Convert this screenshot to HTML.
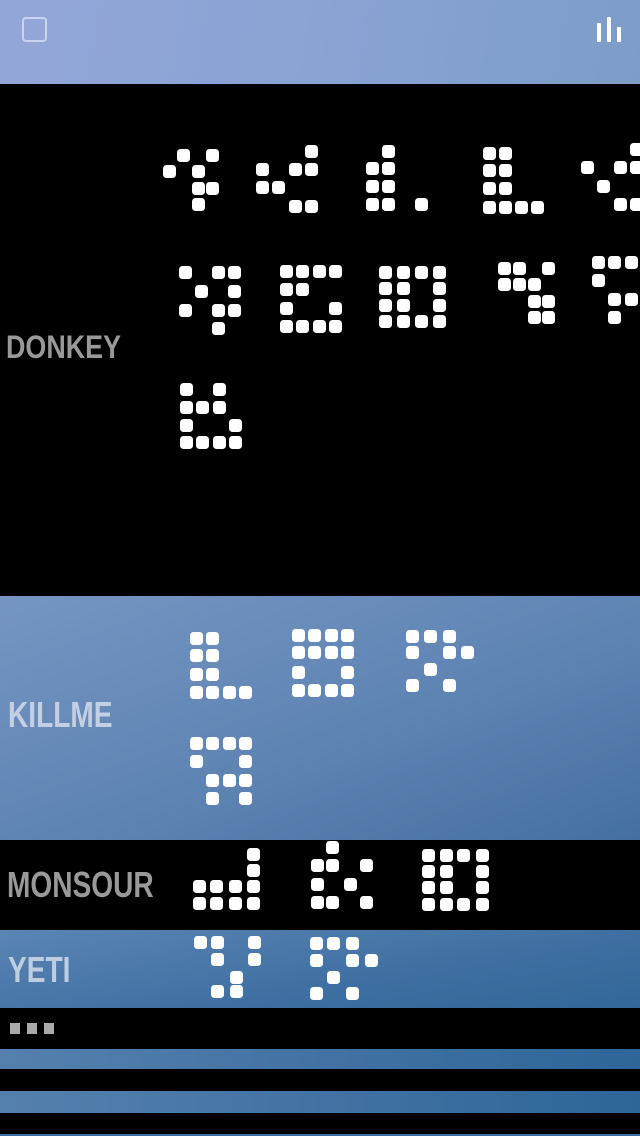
<!DOCTYPE html>
<html><head><meta charset="utf-8"><style>
*{margin:0;padding:0}
body{width:640px;height:1136px;position:relative;overflow:hidden;background:#000;font-family:"Liberation Sans",sans-serif}
.b{position:absolute;left:0;width:640px}
.d{position:absolute;width:13px;height:13px;border-radius:3.5px;background:#fff}
.l{position:absolute;font-weight:bold;transform:scaleX(.78);transform-origin:0 0;white-space:nowrap}
</style></head><body>
<div class="b" style="top:0;height:84px;background:linear-gradient(100deg,#93a6d8,#8aa4d4 45%,#7d9dc8)"></div>
<div class="b" style="top:596px;height:244px;background:linear-gradient(160deg,#7695c2,#5e84b3 55%,#44709f)"></div>
<div class="b" style="top:930px;height:78px;background:linear-gradient(170deg,#5a85b4,#3f6fa2 60%,#336799)"></div>
<div class="b" style="top:1049px;height:20px;background:linear-gradient(90deg,#5580ad,#2f6599)"></div>
<div class="b" style="top:1091px;height:22px;background:linear-gradient(90deg,#5580ad,#2f6599)"></div>
<div class="b" style="top:1134px;height:2px;background:#3f6fa2"></div>

<div style="position:absolute;left:22px;top:17px;width:21px;height:21px;border:2px solid #c9d5ef;border-radius:4px"></div>
<div style="position:absolute;left:597px;top:23px;width:3.5px;height:19px;background:#fff;border-radius:1px"></div>
<div style="position:absolute;left:607px;top:17px;width:3.5px;height:25px;background:#fff;border-radius:1px"></div>
<div style="position:absolute;left:617px;top:27px;width:3.5px;height:15px;background:#fff;border-radius:1px"></div>

<div class="l" style="left:6px;top:331px;font-size:32px;line-height:32px;color:#999;transform:scaleX(.84)">DONKEY</div>
<div class="l" style="left:8px;top:697px;font-size:36px;line-height:36px;color:#c3cfe2">KILLME</div>
<div class="l" style="left:7px;top:867px;font-size:36px;line-height:36px;color:#999">MONSOUR</div>
<div class="l" style="left:8px;top:952px;font-size:36px;line-height:36px;color:#bfcde1">YETI</div>

<div style="position:absolute;left:10px;top:1023px;width:10px;height:11px;background:#aaa"></div>
<div style="position:absolute;left:27px;top:1023px;width:10px;height:11px;background:#aaa"></div>
<div style="position:absolute;left:44px;top:1023px;width:10px;height:11px;background:#aaa"></div>

<!-- DONKEY -->
<div class="d" style="left:177px;top:149px"></div><div class="d" style="left:206px;top:149px"></div><div class="d" style="left:163px;top:165px"></div><div class="d" style="left:192px;top:165px"></div><div class="d" style="left:192px;top:182px"></div><div class="d" style="left:206px;top:182px"></div><div class="d" style="left:192px;top:198px"></div>
<div class="d" style="left:305px;top:145px"></div><div class="d" style="left:256px;top:163px"></div><div class="d" style="left:289px;top:163px"></div><div class="d" style="left:305px;top:163px"></div><div class="d" style="left:256px;top:181px"></div><div class="d" style="left:272px;top:181px"></div><div class="d" style="left:289px;top:200px"></div><div class="d" style="left:305px;top:200px"></div>
<div class="d" style="left:382px;top:145px"></div><div class="d" style="left:366px;top:162px"></div><div class="d" style="left:382px;top:162px"></div><div class="d" style="left:366px;top:180px"></div><div class="d" style="left:382px;top:180px"></div><div class="d" style="left:366px;top:198px"></div><div class="d" style="left:382px;top:198px"></div><div class="d" style="left:415px;top:198px"></div>
<div class="d" style="left:483px;top:147px"></div><div class="d" style="left:499px;top:147px"></div><div class="d" style="left:483px;top:164px"></div><div class="d" style="left:499px;top:164px"></div><div class="d" style="left:483px;top:182px"></div><div class="d" style="left:499px;top:182px"></div><div class="d" style="left:483px;top:201px"></div><div class="d" style="left:499px;top:201px"></div><div class="d" style="left:515px;top:201px"></div><div class="d" style="left:531px;top:201px"></div>
<div class="d" style="left:581px;top:161px"></div><div class="d" style="left:597px;top:180px"></div><div class="d" style="left:614px;top:161px"></div><div class="d" style="left:630px;top:161px"></div><div class="d" style="left:630px;top:143px"></div><div class="d" style="left:614px;top:198px"></div><div class="d" style="left:630px;top:198px"></div>
<div class="d" style="left:179px;top:266px"></div><div class="d" style="left:212px;top:266px"></div><div class="d" style="left:228px;top:266px"></div><div class="d" style="left:195px;top:285px"></div><div class="d" style="left:228px;top:285px"></div><div class="d" style="left:179px;top:304px"></div><div class="d" style="left:212px;top:304px"></div><div class="d" style="left:228px;top:304px"></div><div class="d" style="left:212px;top:322px"></div>
<div class="d" style="left:280px;top:265px"></div><div class="d" style="left:296px;top:265px"></div><div class="d" style="left:313px;top:265px"></div><div class="d" style="left:329px;top:265px"></div><div class="d" style="left:280px;top:283px"></div><div class="d" style="left:296px;top:283px"></div><div class="d" style="left:280px;top:302px"></div><div class="d" style="left:329px;top:302px"></div><div class="d" style="left:280px;top:320px"></div><div class="d" style="left:296px;top:320px"></div><div class="d" style="left:313px;top:320px"></div><div class="d" style="left:329px;top:320px"></div>
<div class="d" style="left:379px;top:266px"></div><div class="d" style="left:397px;top:266px"></div><div class="d" style="left:415px;top:266px"></div><div class="d" style="left:433px;top:266px"></div><div class="d" style="left:379px;top:282px"></div><div class="d" style="left:397px;top:282px"></div><div class="d" style="left:433px;top:282px"></div><div class="d" style="left:379px;top:299px"></div><div class="d" style="left:397px;top:299px"></div><div class="d" style="left:433px;top:299px"></div><div class="d" style="left:379px;top:315px"></div><div class="d" style="left:397px;top:315px"></div><div class="d" style="left:415px;top:315px"></div><div class="d" style="left:433px;top:315px"></div>
<div class="d" style="left:498px;top:262px"></div><div class="d" style="left:513px;top:262px"></div><div class="d" style="left:542px;top:262px"></div><div class="d" style="left:498px;top:278px"></div><div class="d" style="left:513px;top:278px"></div><div class="d" style="left:528px;top:278px"></div><div class="d" style="left:528px;top:295px"></div><div class="d" style="left:542px;top:295px"></div><div class="d" style="left:528px;top:311px"></div><div class="d" style="left:542px;top:311px"></div>
<div class="d" style="left:592px;top:256px"></div><div class="d" style="left:608px;top:256px"></div><div class="d" style="left:625px;top:256px"></div><div class="d" style="left:592px;top:274px"></div><div class="d" style="left:608px;top:293px"></div><div class="d" style="left:625px;top:293px"></div><div class="d" style="left:608px;top:311px"></div>
<div class="d" style="left:180px;top:383px"></div><div class="d" style="left:213px;top:383px"></div><div class="d" style="left:180px;top:401px"></div><div class="d" style="left:196px;top:401px"></div><div class="d" style="left:213px;top:401px"></div><div class="d" style="left:180px;top:419px"></div><div class="d" style="left:229px;top:419px"></div><div class="d" style="left:180px;top:436px"></div><div class="d" style="left:196px;top:436px"></div><div class="d" style="left:213px;top:436px"></div><div class="d" style="left:229px;top:436px"></div>

<!-- KILLME -->
<div class="d" style="left:190px;top:632px"></div><div class="d" style="left:206px;top:632px"></div><div class="d" style="left:190px;top:649px"></div><div class="d" style="left:206px;top:649px"></div><div class="d" style="left:190px;top:668px"></div><div class="d" style="left:206px;top:668px"></div><div class="d" style="left:190px;top:686px"></div><div class="d" style="left:206px;top:686px"></div><div class="d" style="left:223px;top:686px"></div><div class="d" style="left:239px;top:686px"></div>
<div class="d" style="left:292px;top:629px"></div><div class="d" style="left:308px;top:629px"></div><div class="d" style="left:325px;top:629px"></div><div class="d" style="left:341px;top:629px"></div><div class="d" style="left:292px;top:646px"></div><div class="d" style="left:308px;top:646px"></div><div class="d" style="left:325px;top:646px"></div><div class="d" style="left:341px;top:646px"></div><div class="d" style="left:292px;top:666px"></div><div class="d" style="left:341px;top:666px"></div><div class="d" style="left:292px;top:684px"></div><div class="d" style="left:308px;top:684px"></div><div class="d" style="left:325px;top:684px"></div><div class="d" style="left:341px;top:684px"></div>
<div class="d" style="left:406px;top:630px"></div><div class="d" style="left:424px;top:630px"></div><div class="d" style="left:443px;top:630px"></div><div class="d" style="left:406px;top:646px"></div><div class="d" style="left:443px;top:646px"></div><div class="d" style="left:461px;top:646px"></div><div class="d" style="left:424px;top:663px"></div><div class="d" style="left:406px;top:679px"></div><div class="d" style="left:443px;top:679px"></div>
<div class="d" style="left:190px;top:737px"></div><div class="d" style="left:206px;top:737px"></div><div class="d" style="left:223px;top:737px"></div><div class="d" style="left:239px;top:737px"></div><div class="d" style="left:190px;top:755px"></div><div class="d" style="left:239px;top:755px"></div><div class="d" style="left:206px;top:774px"></div><div class="d" style="left:223px;top:774px"></div><div class="d" style="left:239px;top:774px"></div><div class="d" style="left:206px;top:792px"></div><div class="d" style="left:239px;top:792px"></div>

<!-- MONSOUR -->
<div class="d" style="left:247px;top:848px"></div><div class="d" style="left:247px;top:864px"></div><div class="d" style="left:193px;top:880px"></div><div class="d" style="left:210px;top:880px"></div><div class="d" style="left:229px;top:880px"></div><div class="d" style="left:247px;top:880px"></div><div class="d" style="left:193px;top:897px"></div><div class="d" style="left:210px;top:897px"></div><div class="d" style="left:229px;top:897px"></div><div class="d" style="left:247px;top:897px"></div>
<div class="d" style="left:326px;top:841px"></div><div class="d" style="left:311px;top:859px"></div><div class="d" style="left:326px;top:859px"></div><div class="d" style="left:360px;top:859px"></div><div class="d" style="left:311px;top:878px"></div><div class="d" style="left:344px;top:878px"></div><div class="d" style="left:311px;top:896px"></div><div class="d" style="left:326px;top:896px"></div><div class="d" style="left:360px;top:896px"></div>
<div class="d" style="left:422px;top:849px"></div><div class="d" style="left:440px;top:849px"></div><div class="d" style="left:457px;top:849px"></div><div class="d" style="left:476px;top:849px"></div><div class="d" style="left:422px;top:865px"></div><div class="d" style="left:440px;top:865px"></div><div class="d" style="left:476px;top:865px"></div><div class="d" style="left:422px;top:881px"></div><div class="d" style="left:440px;top:881px"></div><div class="d" style="left:476px;top:881px"></div><div class="d" style="left:422px;top:898px"></div><div class="d" style="left:440px;top:898px"></div><div class="d" style="left:457px;top:898px"></div><div class="d" style="left:476px;top:898px"></div>

<!-- YETI -->
<div class="d" style="left:194px;top:936px"></div><div class="d" style="left:211px;top:936px"></div><div class="d" style="left:248px;top:936px"></div><div class="d" style="left:211px;top:953px"></div><div class="d" style="left:248px;top:953px"></div><div class="d" style="left:230px;top:971px"></div><div class="d" style="left:211px;top:985px"></div><div class="d" style="left:230px;top:985px"></div>
<div class="d" style="left:310px;top:937px"></div><div class="d" style="left:327px;top:937px"></div><div class="d" style="left:346px;top:937px"></div><div class="d" style="left:310px;top:954px"></div><div class="d" style="left:346px;top:954px"></div><div class="d" style="left:365px;top:954px"></div><div class="d" style="left:327px;top:971px"></div><div class="d" style="left:310px;top:987px"></div><div class="d" style="left:346px;top:987px"></div>
</body></html>
